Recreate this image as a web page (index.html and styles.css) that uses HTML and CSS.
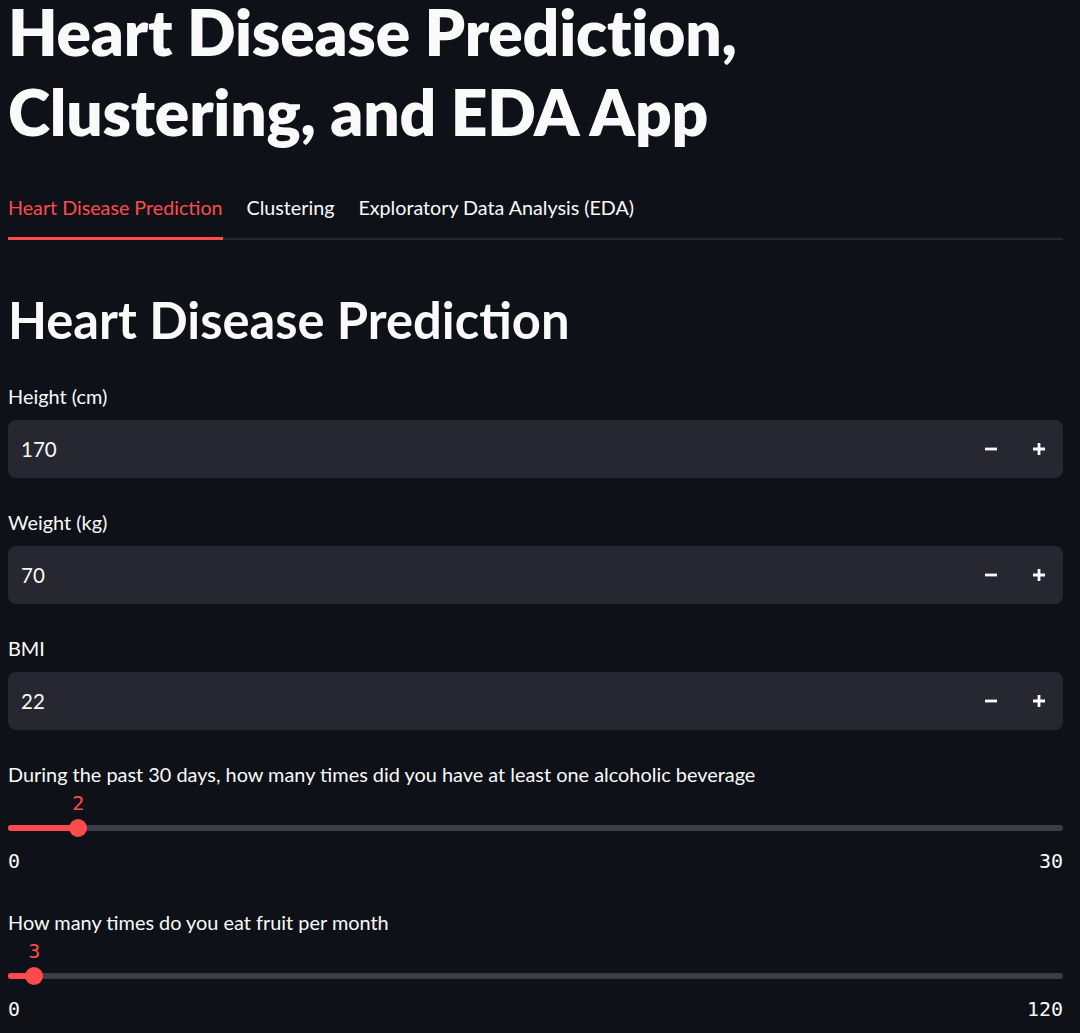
FILE: index.html
```html
<!DOCTYPE html>
<html>
<head>
<meta charset="utf-8">
<title>Heart Disease Prediction, Clustering, and EDA App</title>
<link rel="stylesheet" href="styles.css">
</head>
<body>
<main class="main">
  <h1 class="title">Heart Disease Prediction,<br>Clustering, and EDA App</h1>

  <div class="tabs">
    <div class="tab active">Heart Disease Prediction</div>
    <div class="tab">Clustering</div>
    <div class="tab">Exploratory Data Analysis (EDA)</div>
  </div>

  <h2 class="subtitle">Heart Disease Prediction</h2>

  <div class="field">
    <div class="label">Height (cm)</div>
    <div class="number-input">
      <span class="value">170</span>
      <button class="step" aria-label="decrement"><svg viewBox="0 0 12 12" width="12" height="12"><path d="M0 6h12"/></svg></button>
      <button class="step" aria-label="increment"><svg viewBox="0 0 12 12" width="12" height="12"><path d="M0 6h12M6 0v12"/></svg></button>
    </div>
  </div>

  <div class="field">
    <div class="label">Weight (kg)</div>
    <div class="number-input">
      <span class="value">70</span>
      <button class="step" aria-label="decrement"><svg viewBox="0 0 12 12" width="12" height="12"><path d="M0 6h12"/></svg></button>
      <button class="step" aria-label="increment"><svg viewBox="0 0 12 12" width="12" height="12"><path d="M0 6h12M6 0v12"/></svg></button>
    </div>
  </div>

  <div class="field">
    <div class="label">BMI</div>
    <div class="number-input">
      <span class="value">22</span>
      <button class="step" aria-label="decrement"><svg viewBox="0 0 12 12" width="12" height="12"><path d="M0 6h12"/></svg></button>
      <button class="step" aria-label="increment"><svg viewBox="0 0 12 12" width="12" height="12"><path d="M0 6h12M6 0v12"/></svg></button>
    </div>
  </div>

  <div class="slider" style="--p:6.6667%">
    <div class="label">During the past 30 days, how many times did you have at least one alcoholic beverage</div>
    <div class="thumb-value"><span>2</span></div>
    <div class="track">
      <div class="rail"><div class="fill"></div></div>
      <div class="thumb"></div>
    </div>
    <div class="ticks"><span>0</span><span>30</span></div>
  </div>

  <div class="slider" style="--p:2.5%">
    <div class="label">How many times do you eat fruit per month</div>
    <div class="thumb-value"><span>3</span></div>
    <div class="track">
      <div class="rail"><div class="fill"></div></div>
      <div class="thumb"></div>
    </div>
    <div class="ticks"><span>0</span><span>120</span></div>
  </div>
</main>
</body>
</html>
```
FILE: styles.css
```css
* { box-sizing: border-box; }
html, body { margin: 0; padding: 0; background: #0e1117; }
body {
  color: #fafafa;
  font-family: Lato, "Noto Sans", sans-serif;
  overflow: hidden;
}
.main {
  padding: 0 17px 0 8px;
}
.title {
  margin: -8px 0 0 0;
  font-size: 64px;
  font-weight: 800;
  line-height: 80px;
  letter-spacing: -0.2px;
}
.tabs {
  display: flex;
  gap: 24px;
  margin-top: 44px;
  border-bottom: 2px solid #262730;
}
.tab {
  font-size: 19.7px;
  line-height: 24px;
  padding-bottom: 17px;
  border-bottom: 3px solid transparent;
  margin-bottom: -2px;
  white-space: nowrap;
}
.tab.active {
  color: #ff4b4b;
  border-bottom-color: #ff4b4b;
}
.subtitle {
  margin: 50px 0 0 0;
  font-size: 50.7px;
  font-weight: 700;
  line-height: 60px;
}
.field {
  margin-top: 34px;
}
.field + .field { margin-top: 32px; }
.label {
  font-size: 19.9px;
  line-height: 24px;
  margin-bottom: 12px;
}
.number-input {
  display: flex;
  align-items: center;
  height: 58px;
  background: #262730;
  border-radius: 8px;
  padding-left: 13px;
}
.value {
  flex: 1;
  font-size: 20.5px;
}
.step {
  width: 48px;
  height: 58px;
  border: 0;
  background: transparent;
  padding: 0;
  display: flex;
  align-items: center;
  justify-content: center;
}
.step svg path {
  stroke: #fafafa;
  stroke-width: 2.8;
  fill: none;
}
.slider {
  margin-top: 32px;
}
.slider + .slider { margin-top: 37px; }
.slider .label { margin-bottom: 5px; }
.thumb-value {
  height: 24px;
  line-height: 24px;
  font-family: "DejaVu Sans Mono", "Liberation Mono", monospace;
  font-size: 20px;
  color: #ff4b4b;
  margin-bottom: 4px;
}
.thumb-value span {
  display: inline-block;
  margin-left: var(--p);
  transform: translateX(-50%);
}
.track {
  position: relative;
  height: 18px;
  display: flex;
  align-items: center;
}
.rail {
  width: 100%;
  height: 6px;
  border-radius: 3px;
  background: #3b3d48;
  overflow: hidden;
}
.fill {
  width: var(--p);
  height: 100%;
  background: #ff4b4b;
}
.thumb {
  position: absolute;
  top: 0;
  left: var(--p);
  width: 18px;
  height: 18px;
  margin-left: -9px;
  border-radius: 50%;
  background: #ff4b4b;
}
.ticks {
  display: flex;
  justify-content: space-between;
  margin-top: 12px;
  height: 24px;
  line-height: 24px;
  font-family: "DejaVu Sans Mono", "Liberation Mono", monospace;
  font-size: 20px;
}
```
